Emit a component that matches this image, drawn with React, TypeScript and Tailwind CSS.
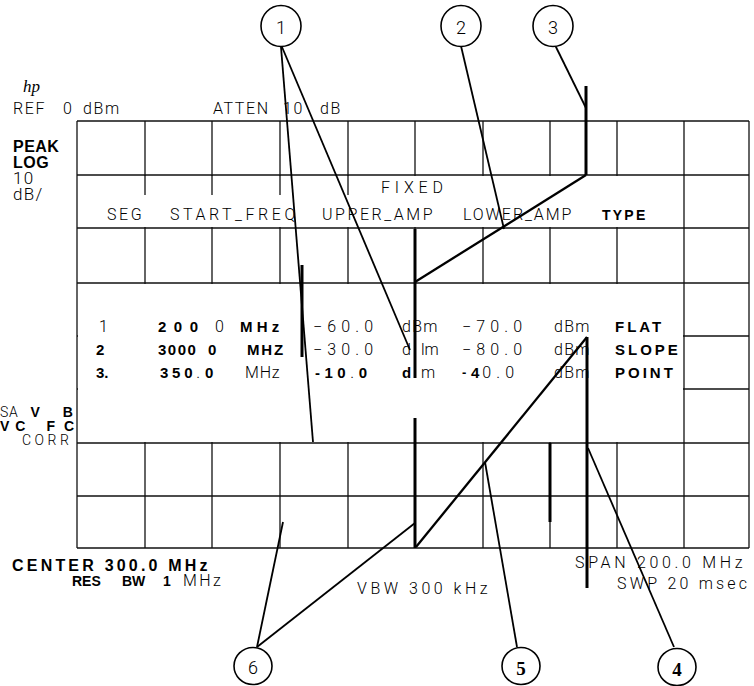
import React from "react";

const thin = "font-['Roboto',sans-serif] font-light";
const bold = "font-['Liberation_Sans',Arial,sans-serif] font-bold";

// graticule lines (10 x 8 divisions)
const X = [77, 145, 212, 280, 348, 415, 483, 550, 617, 684, 749];
const Y = [121, 175, 228, 283, 336, 389, 443, 496, 548];

function Drawing() {
  return (
    <svg className="absolute inset-0" width={754} height={686} viewBox="0 0 754 686">
      <g stroke="#111" strokeWidth={1.3} fill="none">
        {X.map((x) => (
          <line key={"v" + x} x1={x} y1={121} x2={x} y2={548} />
        ))}
        {Y.map((y) => (
          <line key={"h" + y} x1={77} y1={y} x2={749} y2={y} />
        ))}
      </g>

      {/* table overlay blanks out the graticule */}
      <rect x={78} y={176} width={605} height={51} fill="#fff" />
      <rect x={78} y={284} width={605} height={158} fill="#fff" />
      <g stroke="#111" strokeWidth={1.3}>
        {[145, 212, 280, 348].map((x) => (
          <line key={x} x1={x} y1={175} x2={x} y2={195} />
        ))}
      </g>

      {/* limit line traces */}
      <g stroke="#000" strokeWidth={3} fill="none">
        <line x1={586} y1={86} x2={586} y2={175} />
        <line x1={415} y1={229} x2={415} y2={378} />
        <line x1={415} y1={418} x2={415} y2={548} />
        <line x1={302} y1={265} x2={302} y2={357} />
        <line x1={587} y1={337} x2={587} y2={588} />
        <line x1={550} y1={443} x2={550} y2={522} />
      </g>
      <g stroke="#000" strokeWidth={2.3} fill="none">
        <line x1={586} y1={175} x2={415} y2={282} />
        <line x1={587} y1={337} x2={416} y2={547} />
      </g>

      {/* callout leaders */}
      <g stroke="#000" strokeWidth={1.8} fill="none">
        <line x1={281} y1={47} x2={313} y2={442} />
        <line x1={282} y1={47} x2={410} y2={350} />
        <line x1={461} y1={46} x2={504} y2={229} />
        <line x1={555} y1={45} x2={586} y2={108} />
        <line x1={588} y1={448} x2={674} y2={647} />
        <line x1={485} y1={462} x2={517} y2={647} />
        <line x1={257} y1={647} x2={283} y2={522} />
        <line x1={257} y1={647} x2={415} y2={523} />
      </g>

      <g stroke="#000" strokeWidth={1.6} fill="#fff">
        <ellipse cx={281} cy={26} rx={20} ry={20.5} />
        <ellipse cx={461} cy={26} rx={20} ry={20.5} />
        <ellipse cx={553} cy={26} rx={20} ry={20.5} />
        <ellipse cx={253} cy={666} rx={19} ry={18.5} />
        <ellipse cx={521} cy={666} rx={19} ry={18.5} />
        <ellipse cx={677} cy={667} rx={19} ry={18.5} />
      </g>
      <g textAnchor="middle" dominantBaseline="central">
        <text x={281} y={27} className={`${thin} text-[18px]`}>1</text>
        <text x={461} y={27} className={`${thin} text-[18px]`}>2</text>
        <text x={553} y={27} className={`${thin} text-[18px]`}>3</text>
        <text x={253} y={667} className={`${thin} text-[18px]`}>6</text>
        <text x={521} y={668} className="font-['Liberation_Serif',serif] font-bold text-[19px]">5</text>
        <text x={677} y={669} className="font-['Liberation_Serif',serif] font-bold text-[19px]">4</text>
      </g>
    </svg>
  );
}

const rowGrid = "grid h-[23px] grid-cols-[62px_82px_73px_89px_60px_92px_61px_90px] items-start";

function LimitTable() {
  return (
    <div className="absolute left-[96px] top-[319px] flex flex-col text-[16px] leading-[16px]">
      <div className={rowGrid}>
        <span className={`${thin} pl-[3px]`}>1</span>
        <span className="flex">
          <span className={`${bold} text-[15px] w-[57px] tracking-[0.5em]`}>200</span>
          <span className={thin}>0</span>
        </span>
        <span className={`${bold} text-[15px] tracking-[0.28em]`}>MHz</span>
        <span className={`${thin} tracking-[0.32em]`}>−60.0</span>
        <span className={`${thin} tracking-[0.08em]`}>dBm</span>
        <span className={`${thin} tracking-[0.32em]`}>−70.0</span>
        <span className={`${thin} tracking-[0.08em]`}>dBm</span>
        <span className={`${bold} text-[15px] tracking-[0.2em]`}>FLAT</span>
      </div>
      <div className={rowGrid}>
        <span className={`${bold} text-[15px]`}>2</span>
        <span className="flex">
          <span className={`${bold} text-[15px] w-[50px] tracking-[0.1em]`}>3000</span>
          <span className={`${bold} text-[15px]`}>0</span>
        </span>
        <span className={`${bold} text-[15px] pl-[7px] tracking-[0.12em]`}>MHZ</span>
        <span className={`${thin} tracking-[0.32em]`}>−30.0</span>
        <span className="flex">
          <span className={`${thin} w-[19px]`}>d</span>
          <span className={thin}>lm</span>
        </span>
        <span className={`${thin} tracking-[0.32em]`}>−80.0</span>
        <span className={`${thin} tracking-[0.08em]`}>dBm</span>
        <span className={`${bold} text-[15px] tracking-[0.2em]`}>SLOPE</span>
      </div>
      <div className={rowGrid}>
        <span className={`${bold} text-[15px]`}>3.</span>
        <span className="flex pl-[2px]">
          <span className={`${bold} text-[15px] tracking-[0.25em]`}>350</span>
          <span className={`${thin} tracking-[0.3em]`}>.</span>
          <span className={`${bold} text-[15px]`}>0</span>
        </span>
        <span className={`${thin} pl-[5px] tracking-[0.05em]`}>MHz</span>
        <span className="flex pl-[2px]">
          <span className={`${bold} text-[15px] tracking-[0.3em]`}>-10</span>
          <span className={`${thin} tracking-[0.3em]`}>.</span>
          <span className={`${bold} text-[15px]`}>0</span>
        </span>
        <span className="flex">
          <span className={`${bold} text-[15px] w-[19px]`}>d</span>
          <span className={thin}>m</span>
        </span>
        <span className="flex">
          <span className={`${bold} text-[13px] w-[9px]`}>-</span>
          <span className={`${bold} text-[15px] tracking-[0.2em]`}>4</span>
          <span className={`${thin} tracking-[0.32em]`}>0.0</span>
        </span>
        <span className={`${thin} tracking-[0.08em]`}>dBm</span>
        <span className={`${bold} text-[15px] tracking-[0.2em]`}>POINT</span>
      </div>
    </div>
  );
}

export default function App() {
  return (
    <div className="relative w-[754px] h-[686px] overflow-hidden bg-white text-black">
      <Drawing />

      {/* top-left annotations */}
      <div className="absolute left-[13px] top-[79px] flex flex-col">
        <div className="h-[22px] pl-[10px] font-['Liberation_Serif',serif] italic text-[17px] leading-[16px]">hp</div>
        <div className={`flex h-[37px] text-[16px] leading-[16px] ${thin} tracking-[0.1em]`}>
          <span className="w-[50px]">REF</span>
          <span className="w-[20px]">0</span>
          <span className="w-[130px]">dBm</span>
          <span className="w-[70px]">ATTEN</span>
          <span className="w-[37px]">10</span>
          <span>dB</span>
        </div>
        <div className={`h-[17px] text-[16px] leading-[17px] ${bold} tracking-[0.03em]`}>PEAK</div>
        <div className={`h-[15px] text-[16px] leading-[15px] ${bold} tracking-[0.03em]`}>LOG</div>
        <div className={`h-[16px] text-[17px] leading-[16px] ${thin} tracking-[0.08em]`}>10</div>
        <div className={`h-[16px] text-[17px] leading-[16px] ${thin} tracking-[0.08em]`}>dB/</div>
      </div>

      {/* table header */}
      <div className={`absolute left-[381px] top-[180px] text-[16px] leading-[16px] ${thin} tracking-[0.3em]`}>FIXED</div>
      <div className={`absolute left-[107px] top-[207px] flex text-[16px] leading-[16px] ${thin} tracking-[0.16em]`}>
        <span className="w-[63px]">SEG</span>
        <span className="w-[152px] tracking-[0.22em]">START_FREQ</span>
        <span className="w-[141px]">UPPER_AMP</span>
        <span className="w-[139px] tracking-[0.12em]">LOWER_AMP</span>
        <span className={`${bold} text-[14px] tracking-[0.16em]`}>TYPE</span>
      </div>

      <LimitTable />

      {/* correction flags */}
      <div className="absolute left-0 top-[405px] flex flex-col text-[14px] leading-[14px]">
        <div className="flex h-[14px]">
          <span className={`${thin} tracking-[0.05em]`}>SA</span>
          <span className={`${bold} ml-[12px]`}>V</span>
          <span className={`${bold} ml-[23px]`}>B</span>
        </div>
        <div className="flex h-[14px]">
          <span className={bold}>V</span>
          <span className={`${bold} ml-[6px]`}>C</span>
          <span className={`${bold} ml-[21px]`}>F</span>
          <span className={`${bold} ml-[9px]`}>C</span>
        </div>
        <div className={`h-[14px] pl-[22px] ${thin} tracking-[0.25em]`}>CORR</div>
      </div>

      {/* bottom annotations */}
      <div className="absolute left-[12px] top-[558px] flex flex-col">
        <div className={`h-[15px] text-[16px] leading-[16px] ${bold} tracking-[0.2em]`}>CENTER 300.0 MHz</div>
        <div className="flex pl-[60px] text-[14px] leading-[16px]">
          <span className={`${bold} w-[50px]`}>RES</span>
          <span className={`${bold} w-[41px]`}>BW</span>
          <span className={`${bold} w-[20px]`}>1</span>
          <span className={`${thin} text-[16px] tracking-[0.15em]`}>MHz</span>
        </div>
      </div>
      <div className={`absolute left-[357px] top-[581px] text-[16px] leading-[16px] ${thin} tracking-[0.22em]`}>VBW 300 kHz</div>
      <div className={`absolute left-[575px] top-[555px] whitespace-nowrap text-[16px] leading-[16px] ${thin} tracking-[0.23em]`}>SPAN 200.0 MHz</div>
      <div className={`absolute left-[617px] top-[576px] whitespace-nowrap text-[16px] leading-[16px] ${thin} tracking-[0.2em]`}>SWP 20 msec</div>
    </div>
  );
}
